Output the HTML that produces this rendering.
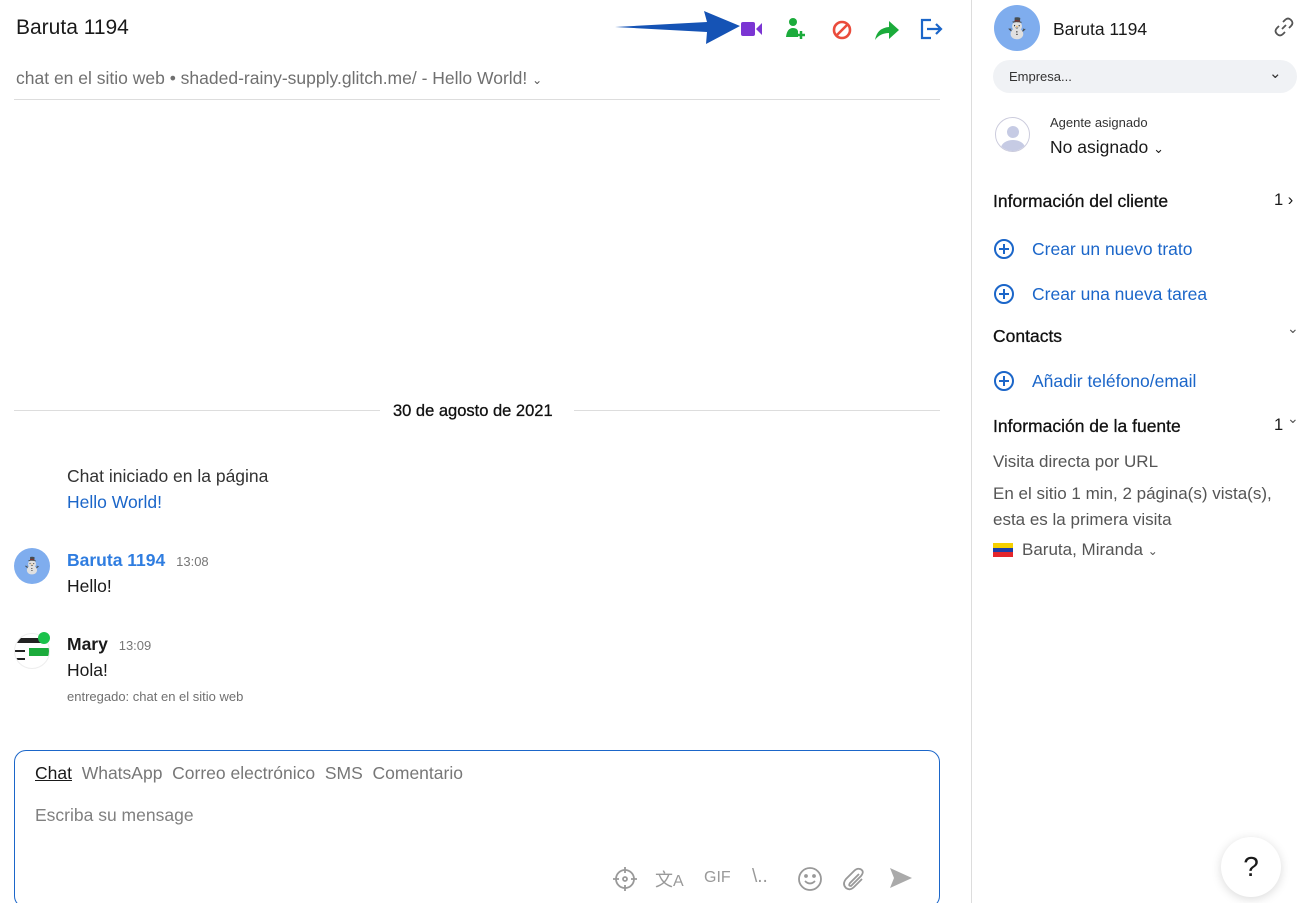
<!DOCTYPE html>
<html><head><meta charset="utf-8"><style>
*{box-sizing:border-box;margin:0;padding:0}
html,body{width:1304px;height:903px;overflow:hidden}
body{background:#fff;font-family:"Liberation Sans",sans-serif;color:#1a1a1a;position:relative}
.a{position:absolute;white-space:nowrap}
.g{color:#707070}
.b{color:#1b66c9}
.av{border-radius:50%;background:#7fadee;display:flex;align-items:center;justify-content:center}
.h{font-size:17.5px;color:#111;-webkit-text-stroke:0.3px #111}
</style></head><body>
<div class="a" style="left:16px;top:16px;font-size:21px">Baruta 1194</div>
<svg class="a" style="left:612px;top:8px" width="130" height="38" viewBox="0 0 130 38"><path d="M3 19 L95 14 L92 3 L128 18 L94 36 L95 24 Z" fill="#1553b5"/></svg>
<svg class="a" style="left:740px;top:19px" width="24" height="20" viewBox="0 0 24 20"><rect x="1" y="3" width="14" height="14" rx="2" fill="#7b35d3"/><path d="M16 10 L22 4 V16 Z" fill="#7b35d3"/></svg>
<svg class="a" style="left:784px;top:17px" width="24" height="24" viewBox="0 0 24 24"><circle cx="9" cy="5" r="4" fill="#1bab3b"/><path d="M2 20 Q3 11 9 11 Q13 11 14 14 L14 20 Z" fill="#1bab3b"/><path d="M17 14 V22 M13 18 H21" stroke="#1bab3b" stroke-width="2.5"/></svg>
<svg class="a" style="left:831px;top:19px" width="22" height="22" viewBox="0 0 22 22"><circle cx="11" cy="11" r="8" fill="none" stroke="#ea4c3c" stroke-width="2.6"/><path d="M5.5 16.5 L16.5 5.5" stroke="#ea4c3c" stroke-width="2.6"/></svg>
<svg class="a" style="left:874px;top:19px" width="26" height="22" viewBox="0 0 26 22"><path d="M1 21 Q3 9 15 8 V2 L25 11 L15 20 V14 Q6 14 1 21Z" fill="#1bab3b"/></svg>
<svg class="a" style="left:919px;top:17px" width="26" height="24" viewBox="0 0 26 24"><path d="M12 3 H3 V21 H12" fill="none" stroke="#1b66c9" stroke-width="2.2"/><path d="M8 12 H22 M17 7 L22 12 L17 17" fill="none" stroke="#1b66c9" stroke-width="2.2"/></svg>
<div class="a g" style="left:16px;top:68px;font-size:17.5px">chat en el sitio web • shaded-rainy-supply.glitch.me/ - Hello World! <span style="font-size:12px;color:#555">&#8964;</span></div>
<div class="a" style="left:14px;top:99px;width:926px;height:1px;background:#ddd"></div>

<div class="a" style="left:14px;top:410px;width:366px;height:1px;background:#ddd"></div>
<div class="a" style="left:574px;top:410px;width:366px;height:1px;background:#ddd"></div>
<div class="a h" style="left:393px;top:402px;font-size:16.5px">30 de agosto de 2021</div>

<div class="a" style="left:67px;top:466px;font-size:17.5px;color:#333">Chat iniciado en la página</div>
<div class="a b" style="left:67px;top:492px;font-size:17.5px">Hello World!</div>

<div class="a av" style="left:14px;top:548px;width:36px;height:36px;font-size:16px">⛄</div>
<div class="a" style="left:67px;top:550px;font-size:17.5px;font-weight:bold;color:#2f7de0">Baruta 1194 <span style="font-weight:normal;font-size:13px;color:#777;margin-left:6px">13:08</span></div>
<div class="a" style="left:67px;top:576px;font-size:17.5px">Hello!</div>

<div class="a" style="left:14px;top:633px;width:36px;height:36px;border-radius:50%;background:#fff;overflow:hidden;border:1px solid #eee"><div style="position:absolute;left:0;top:4px;width:36px;height:5px;background:#222"></div><div style="position:absolute;left:14px;top:14px;width:20px;height:8px;background:#1bab3b"></div><div style="position:absolute;left:0;top:16px;width:10px;height:2px;background:#222"></div><div style="position:absolute;left:0;top:24px;width:10px;height:2px;background:#222"></div></div>
<div class="a" style="left:38px;top:632px;width:12px;height:12px;border-radius:50%;background:#1bc24b"></div>
<div class="a" style="left:67px;top:634px;font-size:17.5px;font-weight:bold">Mary <span style="font-weight:normal;font-size:13px;color:#777;margin-left:6px">13:09</span></div>
<div class="a" style="left:67px;top:660px;font-size:17.5px">Hola!</div>
<div class="a g" style="left:67px;top:689px;font-size:13px">entregado: chat en el sitio web</div>

<div class="a" style="left:14px;top:750px;width:926px;height:158px;border:1px solid #1b66c9;border-radius:12px"></div>
<div class="a" style="left:35px;top:763px;font-size:17.5px;color:#777"><span style="color:#1a1a1a;text-decoration:underline">Chat</span>&nbsp; WhatsApp&nbsp; Correo electrónico&nbsp; SMS&nbsp; Comentario</div>
<div class="a g" style="left:35px;top:805px;font-size:17.5px;color:#808080">Escriba su mensage</div>
<svg class="a" style="left:612px;top:866px" width="26" height="26" viewBox="0 0 26 26" fill="none" stroke="#999" stroke-width="1.8"><circle cx="13" cy="13" r="9"/><circle cx="13" cy="13" r="2"/><path d="M13 1V7M13 19V25M1 13H7M19 13H25"/></svg>
<div class="a" style="left:655px;top:866px;font-size:18px;color:#999">文<span style="font-size:16px">A</span></div>
<div class="a" style="left:704px;top:869px;font-size:16px;color:#999">GIF</div>
<div class="a" style="left:752px;top:866px;font-size:19px;color:#999">\..</div>
<svg class="a" style="left:797px;top:866px" width="26" height="26" viewBox="0 0 26 26" fill="none" stroke="#999" stroke-width="1.8"><circle cx="13" cy="13" r="11"/><circle cx="9" cy="10" r="1" fill="#999"/><circle cx="17" cy="10" r="1" fill="#999"/><path d="M8 15Q13 20 18 15"/></svg>
<svg class="a" style="left:841px;top:866px" width="26" height="26" viewBox="0 0 26 26" fill="none" stroke="#999" stroke-width="1.8"><path d="M18 8 L9 17 Q7 20 10 20 L20 10 Q24 5 19 3 Q16 2 13 5 L5 13 Q1 18 5 22 Q9 25 13 21 L21 13"/></svg>
<svg class="a" style="left:889px;top:867px" width="24" height="22" viewBox="0 0 24 22"><path d="M1 1 L23 11 L1 21 L5 11 Z" fill="#aaa"/></svg>

<div class="a" style="left:971px;top:0;width:1px;height:903px;background:#ddd"></div>
<div class="a av" style="left:994px;top:5px;width:46px;height:46px;font-size:20px">⛄</div>
<div class="a" style="left:1053px;top:19px;font-size:17.5px">Baruta 1194</div>
<svg class="a" style="left:1274px;top:17px" width="20" height="20" viewBox="0 0 20 20" fill="none" stroke="#555" stroke-width="1.8"><path d="M8 12 L12 8 M9 5 L11 3 Q14 0 17 3 Q20 6 17 9 L15 11 M11 15 L9 17 Q6 20 3 17 Q0 14 3 11 L5 9"/></svg>
<div class="a" style="left:993px;top:60px;width:304px;height:33px;border-radius:17px;background:#f0f2f5"></div>
<div class="a" style="left:1009px;top:69px;font-size:13px;color:#333">Empresa...</div>
<div class="a" style="left:1269px;top:64px;font-size:15px;color:#333">&#8964;</div>
<div class="a" style="left:995px;top:117px;width:35px;height:35px;border-radius:50%;border:1px solid #ccd;overflow:hidden;background:#fff"><div style="position:absolute;left:11px;top:8px;width:12px;height:12px;border-radius:50%;background:#c6cbe4"></div><div style="position:absolute;left:5px;top:22px;width:24px;height:16px;border-radius:50%;background:#c6cbe4"></div></div>
<div class="a" style="left:1050px;top:115px;font-size:13px;color:#333">Agente asignado</div>
<div class="a" style="left:1050px;top:137px;font-size:17.5px">No asignado <span style="font-size:13px">&#8964;</span></div>

<div class="a h" style="left:993px;top:191px">Información del cliente</div>
<div class="a" style="left:1274px;top:191px;font-size:16.5px">1 ›</div>
<svg class="a" style="left:993px;top:238px" width="22" height="22" viewBox="0 0 22 22" fill="none" stroke="#1b66c9" stroke-width="2"><circle cx="11" cy="11" r="9"/><path d="M11 6V16M6 11H16"/></svg>
<div class="a b" style="left:1032px;top:239px;font-size:17.5px">Crear un nuevo trato</div>
<svg class="a" style="left:993px;top:283px" width="22" height="22" viewBox="0 0 22 22" fill="none" stroke="#1b66c9" stroke-width="2"><circle cx="11" cy="11" r="9"/><path d="M11 6V16M6 11H16"/></svg>
<div class="a b" style="left:1032px;top:284px;font-size:17.5px">Crear una nueva tarea</div>
<div class="a h" style="left:993px;top:326px">Contacts</div>
<div class="a" style="left:1287px;top:320px;font-size:14px;color:#555">&#8964;</div>
<svg class="a" style="left:993px;top:370px" width="22" height="22" viewBox="0 0 22 22" fill="none" stroke="#1b66c9" stroke-width="2"><circle cx="11" cy="11" r="9"/><path d="M11 6V16M6 11H16"/></svg>
<div class="a b" style="left:1032px;top:371px;font-size:17.5px">Añadir teléfono/email</div>
<div class="a h" style="left:993px;top:416px">Información de la fuente</div>
<div class="a" style="left:1274px;top:416px;font-size:16.5px">1</div>
<div class="a" style="left:1287px;top:410px;font-size:14px;color:#555">&#8964;</div>
<div class="a" style="left:993px;top:452px;font-size:17px;color:#555">Visita directa por URL</div>
<div class="a" style="left:993px;top:484px;font-size:17px;color:#555">En el sitio 1 min, 2 página(s) vista(s),</div>
<div class="a" style="left:993px;top:510px;font-size:17px;color:#555">esta es la primera visita</div>
<div class="a" style="left:993px;top:543px;width:20px;height:14px"><div style="height:5px;background:#f5d000"></div><div style="height:4px;background:#1d3fa8"></div><div style="height:5px;background:#e4262c"></div></div>
<div class="a" style="left:1022px;top:540px;font-size:17px;color:#555">Baruta, Miranda <span style="font-size:12px">&#8964;</span></div>

<div class="a" style="left:1221px;top:837px;width:60px;height:60px;border-radius:50%;background:#fff;box-shadow:0 2px 10px rgba(0,0,0,.15);display:flex;align-items:center;justify-content:center;font-size:28px">?</div>
</body></html>
